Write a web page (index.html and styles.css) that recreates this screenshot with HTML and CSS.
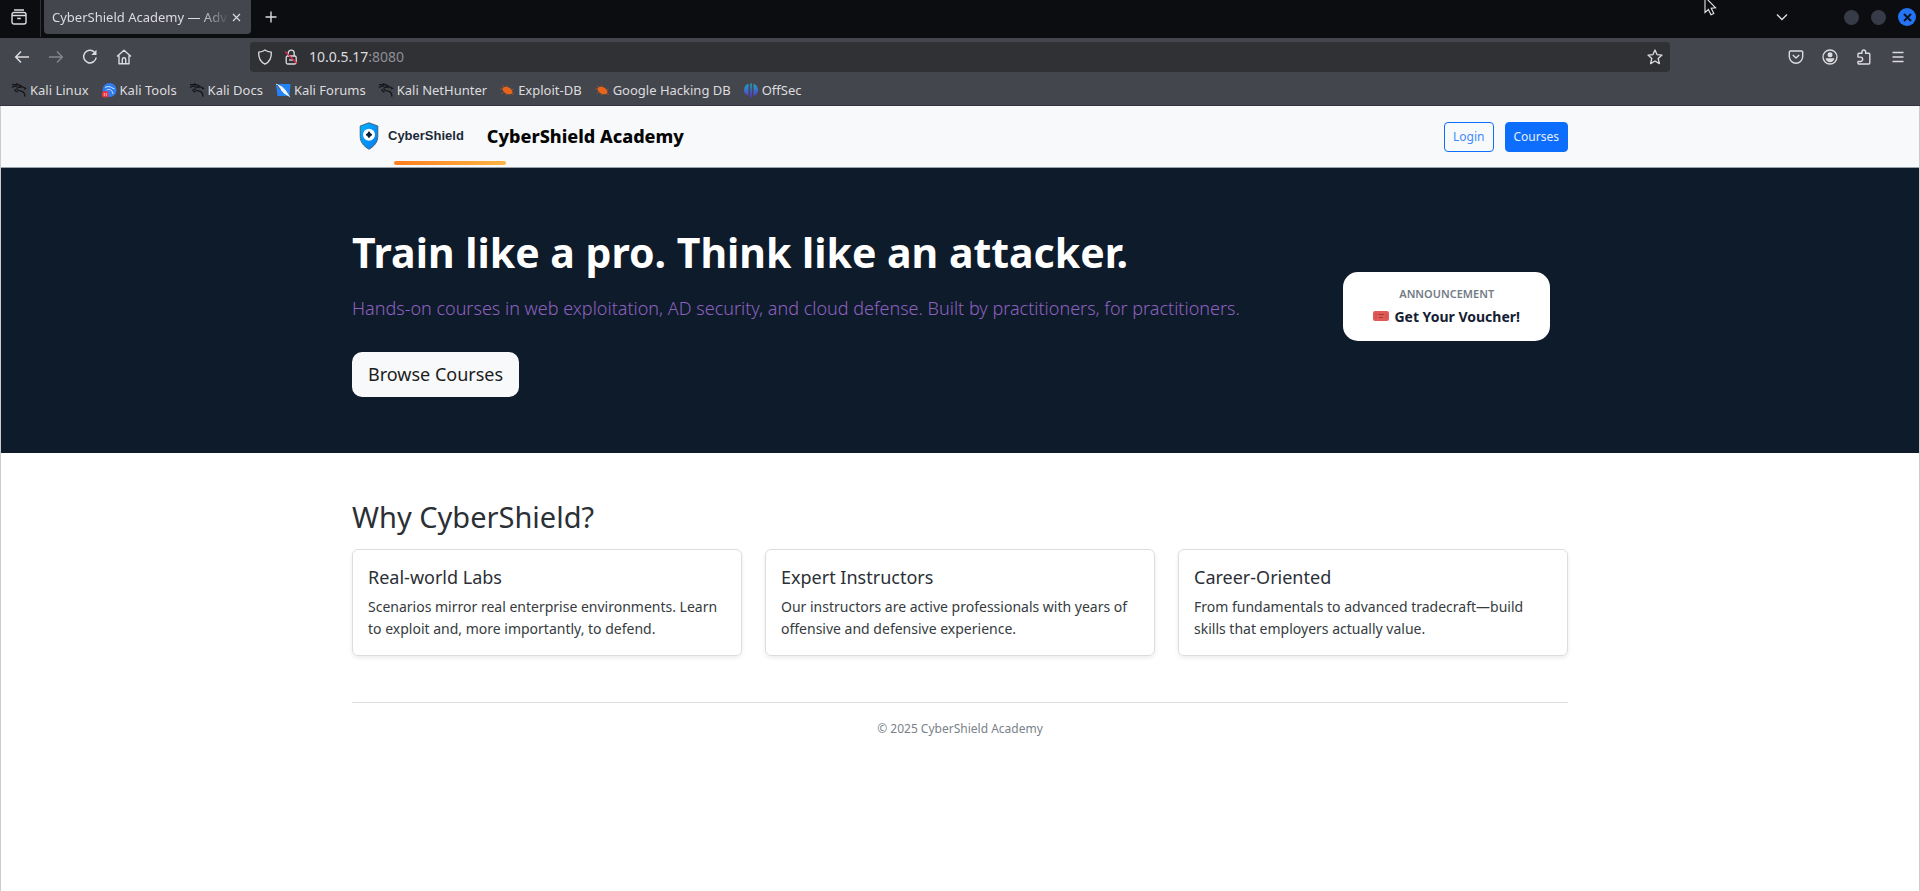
FILE: index.html
```html
<!DOCTYPE html>
<html lang="en">
<head>
<meta charset="utf-8">
<title>CyberShield Academy — Advanced Training</title>
<link rel="stylesheet" href="styles.css">
</head>
<body>
<svg class="defs" aria-hidden="true">
  <symbol id="dragon" viewBox="0 0 16 16">
    <path d="M1 2.600H6M1 5.400C3 3.900 4.500 3.800 6.500 4.200M5 1.600C7.500 3 9.500 3.500 11 4.500L14.500 6.300L13 7.200M10.500 5.600C7.500 4.200 5.600 5.600 6 7.200C6.400 8.800 9 8.600 11 9.300C13.200 10.100 14 11.600 13.800 14.600M4 7.200C3.800 8.500 4.500 9.500 6.500 10" fill="none" stroke="currentColor" stroke-width="1.300"/>
  </symbol>
  <symbol id="bug" viewBox="0 0 16 16">
    <ellipse cx="8.500" cy="8.500" rx="5.400" ry="3.300" transform="rotate(28 8.500 8.500)" fill="#e8641b"/>
    <path d="M5 5L3 3.600M8 5L7.500 3.200M3.500 7H1M4.500 10.500L2.500 11.500M8 11.800L7 13.200M13 8L14.600 6.500M13 11.800L15 12.600" stroke="#c9561f" stroke-width=".6"/>
  </symbol>
</svg>

<div class="browser">
  <div class="tabbar">
    <button class="recent" aria-label="Recent browsing">
      <svg width="16" height="16" viewBox="0 0 16 16" fill="none" stroke="currentColor" stroke-width="1.400"><path d="M3 1h10M3 3.500H13a2 2 0 0 1 2 2V13a2 2 0 0 1-2 2H3a2 2 0 0 1-2-2V5.500a2 2 0 0 1 2-2ZM1 6.500h14M6.200 9.500h3.600"/></svg>
    </button>
    <div class="tab">
      <span class="tab-title">CyberShield Academy — Adv</span>
      <button class="tab-close" aria-label="Close tab"><svg width="9" height="9" viewBox="0 0 9 9" stroke="currentColor" stroke-width="1.200"><path d="M1 1l7 7M8 1L1 8"/></svg></button>
    </div>
    <button class="newtab" aria-label="New tab"><svg width="12" height="12" viewBox="0 0 12 12" stroke="currentColor" stroke-width="1.400"><path d="M6 .5v11M.5 6h11"/></svg></button>
    <div class="window-controls">
      <button class="alltabs" aria-label="List all tabs"><svg width="12" height="8" viewBox="0 0 12 8" fill="none" stroke="currentColor" stroke-width="1.400"><path d="M1 1.500l5 5 5-5"/></svg></button>
      <button class="dot" aria-label="Minimize"></button>
      <button class="dot" aria-label="Maximize"></button>
      <button class="dot dot-close" aria-label="Close window"><svg width="9" height="9" viewBox="0 0 9 9" stroke="#0d1420" stroke-width="2"><path d="M1 1l7 7M8 1L1 8"/></svg></button>
    </div>
    <svg class="pointer" width="14" height="18" viewBox="0 0 14 18" aria-hidden="true"><path d="M1 -3V12.500L4.400 9.500L7 14.800L9.800 13.500L7.200 8.300L11.600 7.800Z" fill="#0c0d11" stroke="#e8e8e8" stroke-width="1.100"/></svg>
  </div>

  <div class="toolbar">
    <div class="nav-buttons">
      <button aria-label="Back"><svg width="16" height="16" viewBox="0 0 16 16" fill="none" stroke="currentColor" stroke-width="1.500"><path d="M15 8H2M7 2.500L1.700 8 7 13.500"/></svg></button>
      <button class="disabled" aria-label="Forward" disabled><svg width="16" height="16" viewBox="0 0 16 16" fill="none" stroke="currentColor" stroke-width="1.500"><path d="M1 8h13M9 2.500L14.300 8 9 13.500"/></svg></button>
      <button aria-label="Reload"><svg width="16" height="16" viewBox="0 0 16 16" fill="none" stroke="currentColor" stroke-width="1.500"><path d="M12.500 3.200A6.300 6.300 0 1 0 14.200 8.500"/><path d="M14.500 .8V6H9.300Z" fill="currentColor" stroke="none"/></svg></button>
      <button aria-label="Home"><svg width="16" height="16" viewBox="0 0 16 16" fill="none" stroke="currentColor" stroke-width="1.400" stroke-linejoin="round"><path d="M1 7.600L8 1.200l7 6.400M3 6.500V14.800H13V6.500M6.300 14.500V10.500a1.700 1.700 0 0 1 3.400 0V14.500"/></svg></button>
    </div>
    <div class="urlbar">
      <svg width="16" height="16" viewBox="0 0 16 16" fill="none" stroke="currentColor" stroke-width="1.300" stroke-linejoin="round"><path d="M8 1C6.300 2.300 4 3 1.700 3.200C1.300 9 3.400 12.800 8 15.200C12.600 12.800 14.700 9 14.300 3.200C12 3 9.700 2.300 8 1Z"/></svg>
      <svg width="16" height="16" viewBox="0 0 16 16" fill="none" stroke="currentColor" stroke-width="1.300"><path d="M5.200 7V4.200a3 3 0 0 1 6 0V7"/><rect x="3.200" y="7" width="10" height="8" rx="1.500"/><path d="M6 11h4.500"/><path d="M2 2.500L14 14.500" stroke="#e22850"/></svg>
      <span class="address">10.0.5.17<span class="port">:8080</span></span>
      <button class="star" aria-label="Bookmark this page"><svg width="16" height="16" viewBox="0 0 16 16" fill="none" stroke="currentColor" stroke-width="1.300" stroke-linejoin="round"><path d="M8 1L10 5.600L15 6.100L11.200 9.500L12.400 14.600L8 12L3.600 14.600L4.800 9.500L1 6.100L6 5.600Z"/></svg></button>
    </div>
    <div class="tool-buttons">
      <button aria-label="Save to Pocket"><svg width="16" height="16" viewBox="0 0 16 16" fill="none" stroke="currentColor" stroke-width="1.400" stroke-linejoin="round"><path d="M2.500 2h11a1.200 1.200 0 0 1 1.200 1.200V7.500a6.700 6.700 0 0 1-13.400 0V3.200A1.200 1.200 0 0 1 2.500 2ZM4.800 6L8 9l3.200-3"/></svg></button>
      <button aria-label="Account"><svg width="16" height="16" viewBox="0 0 16 16"><circle cx="8" cy="8" r="7" fill="none" stroke="currentColor" stroke-width="1.300"/><circle cx="8" cy="5.800" r="2.500" fill="currentColor"/><path d="M3.500 9.300h9c-.3 2.400-2.200 3.900-4.500 3.900S3.800 11.700 3.500 9.300Z" fill="currentColor"/></svg></button>
      <button aria-label="Extensions"><svg width="16" height="16" viewBox="0 0 16 16" fill="none" stroke="currentColor" stroke-width="1.400" stroke-linejoin="round"><path d="M2 7.500V5.200a1 1 0 0 1 1-1H6V2.800a1.800 1.800 0 0 1 3.600 0V4.200H12.800a1 1 0 0 1 1 1V14a1 1 0 0 1-1 1H3a1 1 0 0 1-1-1V12.500H4.500a1.800 1.800 0 0 0 0-4.400H2Z"/></svg></button>
      <button aria-label="Menu"><svg width="16" height="16" viewBox="0 0 16 16" stroke="currentColor" stroke-width="1.400"><path d="M2.500 3.500h11M2.500 8h11M2.500 12.500h11"/></svg></button>
    </div>
  </div>

  <nav class="bookmarks" aria-label="Bookmarks">
    <a href="#"><svg class="ink"><use href="#dragon"/></svg>Kali Linux</a>
    <a href="#"><svg viewBox="0 0 16 16"><circle cx="8.500" cy="8" r="7" fill="#2f7cf0"/><path d="M4 5.500c2.500-1.500 5-1 6.500 0L13.500 7M5.500 8c3-1.500 6 0 6.500 4" fill="none" stroke="#dbe9ff" stroke-width="1"/><rect x="1" y="9" width="6.500" height="6.500" rx="2.500" fill="#e9343f"/><path d="M3.300 11v3M5.300 11v3" stroke="#ffc9cc" stroke-width=".8"/></svg>Kali Tools</a>
    <a href="#"><svg class="ink"><use href="#dragon"/></svg>Kali Docs</a>
    <a href="#"><svg viewBox="0 0 16 16"><path d="M1 2h14.500L14.500 14H2.500Z" fill="#2384f5"/><path d="M.5 1.500L7 4.500 10.500 8 15.500 15.500 9 11.500 5 7Z" fill="#f2f4f7"/><path d="M2 3l3.500 4.500" stroke="#27303c" stroke-width=".8"/></svg>Kali Forums</a>
    <a href="#"><svg class="ink"><use href="#dragon"/></svg>Kali NetHunter</a>
    <a href="#"><svg><use href="#bug"/></svg>Exploit-DB</a>
    <a href="#"><svg><use href="#bug"/></svg>Google Hacking DB</a>
    <a href="#"><svg viewBox="0 0 16 16"><defs><linearGradient id="os" x1="0" y1="0" x2="0" y2="1"><stop offset="0" stop-color="#20a6c4"/><stop offset="1" stop-color="#5a32cc"/></linearGradient></defs><path d="M5.500 1.800V14C2.500 13 1 10.600 1 7.900S2.500 2.800 5.500 1.800ZM10.500 1.800V14C13.500 13 15 10.600 15 7.900S13.500 2.800 10.500 1.800ZM7.200 1.500h1.600V15.500H7.200Z" fill="url(#os)"/></svg>OffSec</a>
  </nav>
</div>

<div class="page">
<header class="site-header">
  <div class="container header-row">
    <a class="brand" href="#">
      <span class="logo">
        <svg class="shield" width="20" height="28" viewBox="0 0 20 28" aria-hidden="true">
          <defs><linearGradient id="sh" x1="0" y1="0" x2="1" y2="1"><stop offset="0" stop-color="#00b4ff"/><stop offset="1" stop-color="#0878f0"/></linearGradient></defs>
          <path d="M10 .8L18.800 4V14.500C18.800 20 15.500 24 10 27.300C4.500 24 1.200 20 1.200 14.500V4Z" fill="url(#sh)" stroke="#3c5a70" stroke-width=".9"/>
          <circle cx="10" cy="12.700" r="6" fill="#fff"/>
          <path d="M10 9.700L11.200 11.500L13 12.700L11.200 13.900L10 15.700L8.800 13.900L7 12.700L8.800 11.500Z" fill="#0b1c33" stroke="#0b1c33" stroke-linejoin="round"/>
        </svg>
        <span class="logo-text">CyberShield</span>
      </span>
      <span class="brand-name">CyberShield Academy</span>
    </a>
    <div class="actions">
      <a class="btn btn-outline" href="#">Login</a>
      <a class="btn btn-primary" href="#">Courses</a>
    </div>
  </div>
</header>

<section class="hero">
  <div class="container hero-row">
    <div class="hero-copy">
      <h1>Train like a pro. Think like an attacker.</h1>
      <p class="lead">Hands-on courses in web exploitation, AD security, and cloud defense. Built by practitioners, for practitioners.</p>
      <a class="btn-browse" href="#">Browse Courses</a>
    </div>
    <a class="voucher" href="#">
      <span class="voucher-label">ANNOUNCEMENT</span>
      <span class="voucher-title"><svg width="16" height="10" viewBox="0 0 16 10" aria-hidden="true"><rect width="16" height="10" rx="2" fill="#e25a56"/><path d="M5 3.500h6M6 6.500h4" stroke="#9c3e40"/><path d="M3 2v6M13 2v6" stroke="#c94c4b"/></svg>Get Your Voucher!</span>
    </a>
  </div>
</section>

<main class="container">
  <section class="why">
    <h2>Why CyberShield?</h2>
    <div class="cards">
      <article class="card"><h3>Real-world Labs</h3><p>Scenarios mirror real enterprise environments. Learn to exploit and, more importantly, to defend.</p></article>
      <article class="card"><h3>Expert Instructors</h3><p>Our instructors are active professionals with years of offensive and defensive experience.</p></article>
      <article class="card"><h3>Career-Oriented</h3><p>From fundamentals to advanced tradecraft—build skills that employers actually value.</p></article>
    </div>
  </section>
  <footer>© 2025 CyberShield Academy</footer>
</main>
</div>
</body>
</html>
```
FILE: styles.css
```css
* { box-sizing: border-box; }
body {
  display: flex;
  flex-direction: column;
  margin: 0;
  min-height: 100vh;
  background: #fff;
  color: #2b3036;
  font: 14px/22px "Noto Sans", sans-serif;
}
h1, h2, h3, p { margin: 0; }
a { color: inherit; text-decoration: none; }
button { margin: 0; padding: 0; border: 0; background: none; color: inherit; font: inherit; }
svg { display: block; flex: none; }
.defs { position: absolute; width: 0; height: 0; }

/* Browser chrome */
.browser {
  background: #44464d;
  border-bottom: 1px solid #34353a;
  color: #dcdcdf;
  font-size: 13px;
  line-height: 20px;
}
.tabbar {
  position: relative;
  display: flex;
  align-items: center;
  height: 38px;
  padding-bottom: 4px;
  background: #0c0d11;
}
.recent {
  display: flex;
  align-items: center;
  align-self: flex-start;
  width: 41px;
  height: 37px;
  padding: 0 0 3px 11px;
  border-right: 1px solid #303136;
}
.tab {
  display: flex;
  align-items: center;
  gap: 2px;
  width: 207px;
  height: 34px;
  margin-left: 3px;
  padding: 0 10px 0 8px;
  border-radius: 0 0 4px 4px;
  background: #44464d;
}
.tab-title {
  flex: 1;
  min-width: 0;
  overflow: hidden;
  white-space: nowrap;
  mask-image: linear-gradient(to left, transparent, #000 30px);
}
.newtab { margin-left: 14px; }
.window-controls { display: flex; align-items: center; margin-left: auto; padding-right: 4px; }
.alltabs { margin-right: 56px; }
.dot {
  display: grid;
  place-items: center;
  width: 15px;
  height: 15px;
  margin-right: 12px;
  border-radius: 50%;
  background: #373b47;
}
.dot-close { width: 18px; height: 18px; margin-right: 0; background: #2474f5; }
.pointer { position: absolute; top: 0; right: 202px; }

.toolbar { display: flex; align-items: center; height: 38px; }
.nav-buttons { display: flex; gap: 18px; width: 250px; padding-left: 14px; }
.disabled { color: #85868b; }
.urlbar {
  display: flex;
  flex: 1;
  align-items: center;
  gap: 10px;
  height: 30px;
  padding: 0 7px;
  border-radius: 4px;
  background: #303135;
}
.address { font-size: 14px; }
.port { color: #8e8f94; }
.star { margin-left: auto; }
.tool-buttons { display: flex; justify-content: flex-end; gap: 18px; width: 250px; padding-right: 14px; }

.bookmarks { display: flex; gap: 12px; padding: 4px 11px 5px; }
.bookmarks a { display: flex; align-items: center; gap: 3px; }
.bookmarks svg { width: 16px; height: 16px; }
.ink { color: #15161a; }

/* Site header */
.page { flex: 1; border: solid rgba(0, 0, 0, .2); border-width: 0 1px; }
.container { width: calc(100% - 32px); max-width: 1216px; margin: 0 auto; }
.site-header { background: #f8f9fb; border-bottom: 1px solid #9ba3ab; }
.header-row { display: flex; align-items: center; justify-content: space-between; min-height: 61px; }
.brand { display: flex; align-items: center; gap: 23px; padding-bottom: 2px; }
.logo {
  position: relative;
  display: flex;
  align-items: center;
  gap: 9px;
  padding-left: 7px;
}
.logo::after {
  content: "";
  position: absolute;
  top: 39px;
  left: 42px;
  width: 112px;
  height: 4px;
  border-radius: 2px;
  background: linear-gradient(90deg, #ff7e1f, #ffb547);
}
.logo-text { color: #1c2938; font: bold 13px/16px "Liberation Sans", Arial, sans-serif; }
.brand-name { color: #060606; font-size: 18px; font-weight: 800; line-height: 26px; }
.actions { display: flex; gap: 11px; }
.btn {
  padding: 4px 8px;
  border: 1px solid #0d6efd;
  border-radius: 4px;
  font-size: 12px;
  line-height: 20px;
}
.btn-outline { color: #3f8bfd; }
.btn-primary { background: #0d6efd; color: #e4efff; }

/* Hero */
.hero { padding: 57px 0 56px; background: #0e1b2a; }
.hero-row { display: flex; align-items: center; justify-content: space-between; gap: 32px; padding-right: 18px; }
h1 { margin-bottom: 15px; color: #fff; font-size: 41px; font-weight: 700; line-height: 54px; }
.lead { margin-bottom: 30px; color: #8e61c0; font-size: 18px; font-weight: 300; line-height: 28px; }
.btn-browse {
  display: inline-block;
  padding: 8px 16px;
  border-radius: 10px;
  background: #f8f9fb;
  color: #1b1d20;
  font-size: 18px;
  line-height: 29px;
}
.voucher {
  display: flex;
  flex: none;
  flex-direction: column;
  align-items: center;
  margin-bottom: 10px;
  padding: 12px 30px;
  border-radius: 15px;
  background: #fff;
}
.voucher-label { color: #737c85; font-size: 11px; font-weight: 600; line-height: 20px; }
.voucher-title { display: flex; align-items: center; gap: 5px; color: #142032; font-size: 14px; font-weight: 700; line-height: 25px; }

/* Features */
.why { padding: 46px 0; }
h2 { margin-bottom: 14px; font-size: 29px; font-weight: 400; line-height: 36px; }
.cards { display: grid; grid-template-columns: repeat(auto-fit, minmax(300px, 1fr)); gap: 23px; }
.card {
  padding: 15px;
  border: 1px solid #dcdddf;
  border-radius: 6px;
  box-shadow: 0 2px 4px rgba(0, 0, 0, .08);
}
.card h3 { margin-bottom: 7px; font-size: 18px; font-weight: 400; line-height: 24px; }
.card p { color: #363b40; }
footer {
  padding: 15px 0;
  border-top: 1px solid #dcdddf;
  color: #79828a;
  font-size: 12px;
  text-align: center;
}
```
